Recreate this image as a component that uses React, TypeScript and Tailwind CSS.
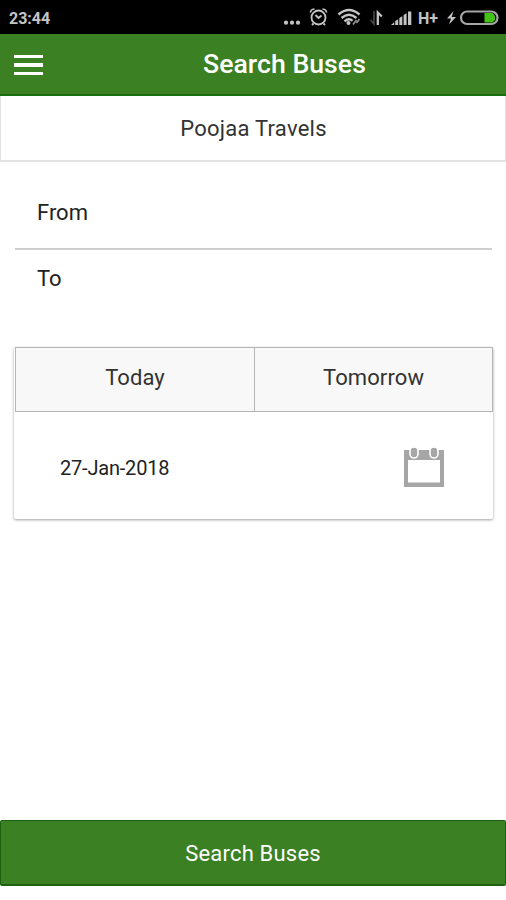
function StatusBar() {
  return (
    <div className="flex h-[34px] items-center justify-between bg-black pl-[9px] text-[#c4c4c4]">
      <span className="pt-[3px] text-[16px] leading-[34px] font-bold">23:44</span>
      <div className="flex h-full items-center">
        <svg width="138" height="34" viewBox="279 0 138 34" fill="none" stroke="#c4c4c4">
          <g fill="#c4c4c4" stroke="none">
            <circle cx="286" cy="22.7" r="2.1" />
            <circle cx="292" cy="22.7" r="2.1" />
            <circle cx="298" cy="22.7" r="2.1" />
          </g>
          {/* alarm */}
          <circle cx="318.5" cy="17.5" r="7" strokeWidth="1.8" />
          <path d="M315.5 15l3 3 3-2.5M313.5 23.5l-1.5 1.5M323.5 23.5l1.5 1.5" strokeWidth="1.8" />
          <path d="M310.5 12.5q0-3 4-3.5M326.5 12.5q0-3-4-3.5" strokeWidth="1.7" />
          {/* wifi */}
          <path d="M338.5 14.5q10.5-9 21 0M341.5 18q7.5-6.5 15 0M344.5 21.3q4.5-4 8-0.5" strokeWidth="2.4" />
          <circle cx="348.5" cy="23" r="2" fill="#c4c4c4" stroke="none" />
          <path d="M353 24.5l3.5-4.5M356.5 23l3-4" strokeWidth="1.8" stroke="#8c8c8c" />
          {/* data arrows */}
          <path d="M374 11v13l-3.5-4" stroke="#444" strokeWidth="1.7" />
          <path d="M377.8 25V12.5l4 4" strokeWidth="2.3" />
          <g fill="#c4c4c4" stroke="none">
            <path d="M391 25l3.2-2.8V25z" />
            <path d="M395.2 25v-4l3-1.8V25z" />
            <path d="M399.3 25v-7l3-1.8V25z" />
            <path d="M403.6 25V15l3-1.8V25z" />
            <path d="M408 25V11.5h3.3V25z" />
          </g>
        </svg>
        <span className="w-[27px] pt-[3px] pl-px text-[16px] leading-[34px] font-bold">H+</span>
        <svg width="62" height="34" viewBox="444 0 62 34" fill="none">
          <path d="M453.5 11l-6.5 7.5h4l-2 6 7-7.5h-4.3z" fill="#c4c4c4" />
          <rect x="461" y="11.5" width="36.5" height="12.5" rx="6.2" stroke="#a5a5a5" strokeWidth="2.2" />
          <path d="M484.5 13h8l2.5 3v4l-2.5 2.5h-8z" fill="#43c316" />
        </svg>
      </div>
    </div>
  );
}

function CalendarIcon() {
  return (
    <svg width="40" height="42" viewBox="0 0 40 42" fill="none">
      <path d="M0 4h40v37H0zM4 14v22.5h32V14z" fill="#a6a6a6" fillRule="evenodd" />
      <rect x="6" y="1" width="8" height="11" rx="4" fill="#a6a6a6" stroke="#fff" strokeWidth="1.6" />
      <rect x="26" y="1" width="8" height="11" rx="4" fill="#a6a6a6" stroke="#fff" strokeWidth="1.6" />
    </svg>
  );
}

const tabs = ['Today', 'Tomorrow'];

export default function App() {
  return (
    <div className="flex h-[900px] w-[506px] flex-col overflow-hidden bg-white font-['Roboto',sans-serif] text-[#333]">
      <StatusBar />

      <header className="grid h-[62px] grid-cols-[203px_1fr] items-center border-b-2 border-[#17700f] bg-[#3b8023]">
        <button aria-label="Menu" className="ml-[14px] flex w-[29px] flex-col gap-[5px] pt-0.5">
          <span className="h-[3.5px] bg-white" />
          <span className="h-[3.5px] bg-white" />
          <span className="h-[3.5px] bg-white" />
        </button>
        <h1 className="text-[26.7px] leading-[60px] font-medium whitespace-nowrap text-white">Search Buses</h1>
      </header>

      <div className="h-[66px] border-x border-b-2 border-[#e3e3e3] pt-px pl-px text-center text-[22px] leading-[64px] tracking-[0.25px]">
        Poojaa Travels
      </div>

      <div className="mr-[14px] ml-[15px] flex flex-col text-[22px] text-[#222]">
        <div className="h-[88px] border-b-2 border-[#cfcfcf] pt-[38px] pl-[22px] leading-[26px]">From</div>
        <div className="h-[97px] pt-[16px] pl-[22px] leading-[26px]">To</div>
      </div>

      <section className="mr-[13px] ml-[14px] h-[172px] rounded-[2px] bg-white shadow-[0_1px_3px_rgba(0,0,0,0.38)]">
        <div className="ml-px grid h-[65px] grid-cols-2 border border-[#b5b5b5] bg-[#f8f8f8]">
          {tabs.map((t, i) => (
            <button key={t} className={`text-[22px] leading-[58px] pb-[4px] tracking-[0.1px] ${i > 0 ? 'border-l border-[#b5b5b5]' : ''}`}>
              {t}
            </button>
          ))}
        </div>
        <div className="flex h-[107px] items-center justify-between pt-[3px] pr-[49px] pl-[46px]">
          <span className="pt-px text-[20px] tracking-[-0.2px] text-[#222]">27-Jan-2018</span>
          <CalendarIcon />
        </div>
      </section>

      <button className="mt-auto mb-[14px] h-[66px] rounded-[2px] border border-b-2 border-[#1c6110] bg-[#3b8023] pt-[2px] text-[22px] tracking-[0.2px] text-white">
        Search Buses
      </button>
    </div>
  );
}
